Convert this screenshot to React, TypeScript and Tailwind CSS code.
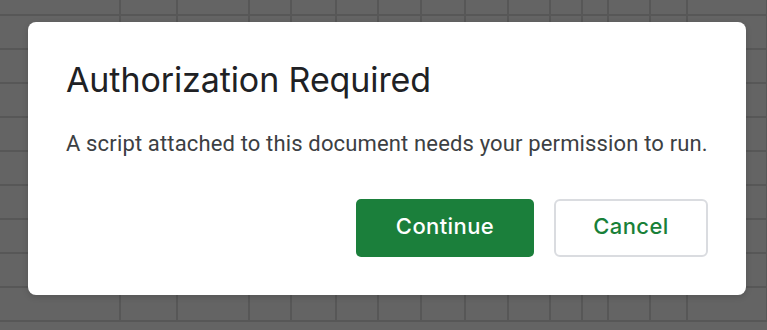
import React from "react";

const colWidths = [121, 57, 72, 42, 45, 42, 43, 44, 43, 42, 32, 26, 42, 37, 80];
const rowHeights = [16, 34, 34, 34, 34, 34, 34, 34, 34, 34];

const SheetGrid = () => {
  return (
    <div className="flex flex-col">
      {rowHeights.map((h, r) => (
        <div key={r} className="flex" style={{ height: h }}>
          {colWidths.map((w, c) => (
            <div
              key={c}
              className="shrink-0 border-r-2 border-b-2 border-[#575757]"
              style={{ width: w }}
            />
          ))}
        </div>
      ))}
    </div>
  );
};

const App = () => {
  return (
    <div className="relative h-[330px] w-[767px] overflow-hidden bg-[#646464]">
      <SheetGrid />
      <div className="absolute left-[28px] top-[22px] flex h-[273px] w-[718px] flex-col rounded-[8px] bg-white px-[38px] pt-[36px] shadow-[0_2px_6px_rgba(0,0,0,0.15)]">
        <h1 className="font-['Inter','Open_Sans',sans-serif] text-[34px] leading-[44px] font-normal tracking-[-0.1px] text-[#202124]">
          Authorization Required
        </h1>
        <p className="mt-[28px] whitespace-nowrap font-['Roboto',sans-serif] text-[22px] leading-[28px] tracking-[0.15px] text-[#3c4043]">
          A script attached to this document needs your permission to run.
        </p>
        <div className="mt-[41px] flex justify-end gap-[20px]">
          <button
            type="button"
            className="h-[58px] w-[178px] rounded-[5px] bg-[#1b7f3b] pb-[3px] font-['Inter','Open_Sans',sans-serif] text-[22px] font-[450] tracking-[0.4px] text-white"
          >
            Continue
          </button>
          <button
            type="button"
            className="h-[58px] w-[154px] rounded-[6px] border-2 border-[#dadce0] bg-white pb-[3px] font-['Inter','Open_Sans',sans-serif] text-[22px] font-[450] tracking-[0.4px] text-[#188038]"
          >
            Cancel
          </button>
        </div>
      </div>
    </div>
  );
};

export default App;
